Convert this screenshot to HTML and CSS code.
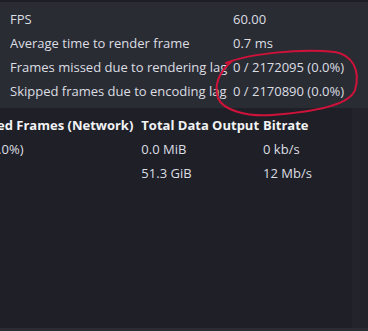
FILE: index.html
```html
<!DOCTYPE html>
<html>
<head>
<meta charset="utf-8">
<link rel="stylesheet" href="styles.css">
</head>
<body>
<div class="page">
  <div class="topline"></div>
  <div class="panel">
    <div class="row"><span class="label">FPS</span><span class="value">60.00</span></div>
    <div class="row"><span class="label">Average time to render frame</span><span class="value">0.7 ms</span></div>
    <div class="row"><span class="label">Frames missed due to rendering lag</span><span class="value">0 / 2172095 (0.0%)</span></div>
    <div class="row"><span class="label">Skipped frames due to encoding lag</span><span class="value">0 / 2170890 (0.0%)</span></div>
  </div>
  <div class="lower">
    <div class="tablewrap">
      <table class="outputs">
        <tr><th class="c1">Dropped Frames (Network)</th><th class="c2">Total Data Output</th><th class="c3">Bitrate</th></tr>
        <tr><td class="c1">0 / 0 (0.0%)</td><td class="c2">0.0 MiB</td><td class="c3">0 kb/s</td></tr>
        <tr><td class="c1"></td><td class="c2">51.3 GiB</td><td class="c3">12 Mb/s</td></tr>
      </table>
    </div>
    <div class="scrolltrack"></div>
  </div>
  <div class="bottomline"></div>
  <svg class="circle" width="368" height="331" viewBox="0 0 368 331">
    <path d="M 226 63 C 248 54, 300 48, 335 52 C 352 55, 361 70, 355 90 C 349 106, 312 112, 272 115 C 246 117, 223 110, 218 98 C 214 85, 218 73, 232 61" fill="none" stroke="#d0123a" stroke-width="2" stroke-linecap="round"/>
  </svg>
</div>
</body>
</html>
```

FILE: styles.css
```css
html, body {
  margin: 0;
  padding: 0;
  background: #1f2027;
}
.page {
  position: relative;
  width: 368px;
  height: 331px;
  display: flex;
  flex-direction: column;
  overflow: hidden;
  font-family: "Open Sans", "DejaVu Sans", sans-serif;
  font-size: 13px;
  color: #dcdee3;
}
.topline {
  height: 2px;
  background: #1e1f25;
}
.panel {
  background: #2a2c33;
  padding: 5px 0 5px 10px;
  box-sizing: border-box;
  height: 106px;
}
.row {
  display: flex;
  height: 24px;
  line-height: 24px;
  white-space: nowrap;
}
.label {
  width: 223px;
  overflow: hidden;
}
.value {
  flex: 1;
}
.lower {
  flex: 1;
  display: flex;
  background: #1f2027;
}
.tablewrap {
  flex: 1;
  overflow: hidden;
  padding-top: 5px;
}
.outputs {
  border-collapse: collapse;
  margin-left: -43px;
  white-space: nowrap;
}
.outputs th, .outputs td {
  text-align: left;
  padding: 0 8px 0 0;
  height: 24px;
  line-height: 24px;
}
.outputs .c2 {
  padding-right: 4px;
}
.outputs th {
  font-weight: 700;
  color: #f2f3f5;
}
.scrolltrack {
  width: 16px;
  background: #23242b;
}
.bottomline {
  height: 3px;
  background: #2b2d34;
}
.circle {
  position: absolute;
  left: 0;
  top: 0;
  pointer-events: none;
}
```
